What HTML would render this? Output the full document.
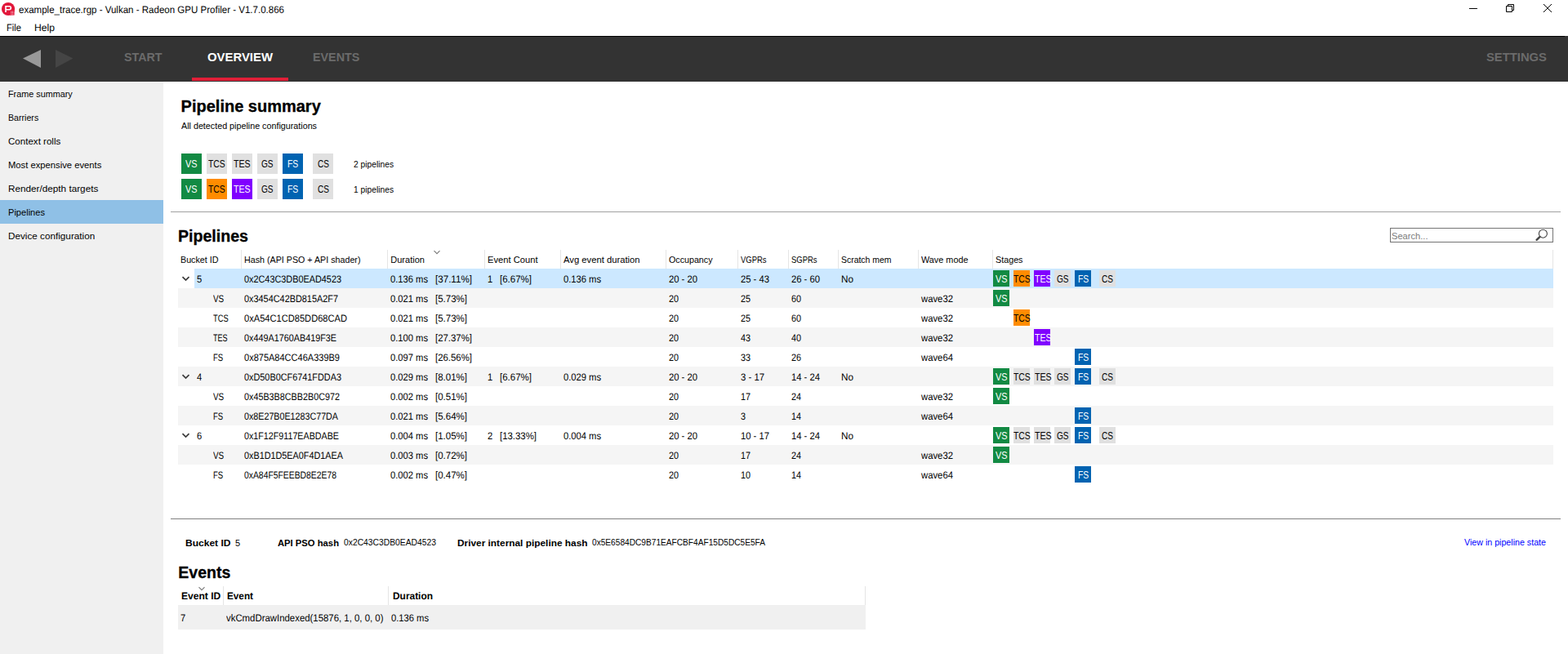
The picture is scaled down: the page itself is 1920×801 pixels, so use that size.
<!DOCTYPE html>
<html lang="en">
<head>
<meta charset="utf-8">
<title>example_trace.rgp - Vulkan - Radeon GPU Profiler - V1.7.0.866</title>
<style>
html,body{margin:0;padding:0;background:#fff;}
body{width:1920px;height:801px;position:relative;overflow:hidden;font-family:"Liberation Sans", sans-serif;}
#app div,#app span,#app svg{position:absolute;}
#app span{white-space:pre;line-height:1;transform-origin:0 0;}
.seg{font-size:12.3px;font-weight:400;text-rendering:geometricPrecision;}
.segb{font-size:12.3px;font-weight:700;text-rendering:geometricPrecision;}
.side{font-size:11px;font-weight:400;}
.tah{font-size:11px;font-weight:400;}
.tahb{font-size:11px;font-weight:700;}
.tab{font-size:14px;font-weight:700;}
.h1{font-size:20px;font-weight:700;}
.h2{font-size:19.5px;font-weight:700;}
.box{font-size:13px;font-weight:400;}

.h1,.h2{-webkit-text-stroke:0.3px #000;}
.bx{width:25px;height:25px;}
.bs{width:20px;height:20px;}

</style>
</head>
<body>
<div id="app">
<header class="titlebar">
<svg style="left:0;top:0" width="22" height="22" viewBox="0 0 22 22"><circle cx="10.05" cy="11" r="8.1" fill="#e2173a"/><path d="M7 14.9V7.8H11.4a1.95 1.95 0 0 1 0 3.9H7" fill="none" stroke="#fff" stroke-width="1.6"/><rect x="12.2" y="13" width="5.4" height="5.6" fill="#e2173a"/><path d="M13.2 14.2h3.4M13.2 15.7h3.4M13.2 17.2h3.4" stroke="#f7b3bf" stroke-width="0.9" stroke-dasharray="1.3 0.5"/></svg>
<svg style="left:1790px;top:0" width="130" height="22" viewBox="0 0 130 22"><path d="M9 10.5h10" stroke="#000" stroke-width="1" fill="none"/><path d="M54.5 7.5h7v7h-7z M56.5 7.5v-2h7v7h-2" stroke="#000" stroke-width="1" fill="none"/><path d="M100 5l10 10 M110 5l-10 10" stroke="#000" stroke-width="1" fill="none"/></svg>
<span class="seg" style="left:23px;top:6px;transform:scaleX(0.9372);">example_trace.rgp - Vulkan - Radeon GPU Profiler - V1.7.0.866</span>
<span class="seg" style="left:8px;top:28px;transform:scaleX(0.9078);">File</span>
<span class="seg" style="left:42px;top:28px;transform:scaleX(0.9883);">Help</span>
</header>
<nav class="toolbar">
<div style="left:0px;top:44px;width:1920px;height:56px;background:#333333;"></div>
<div style="left:0px;top:44px;width:1916px;height:1px;background:#000;"></div>
<svg style="left:0;top:45px" width="120" height="54" viewBox="0 45 120 54"><path d="M28 71.6L50 61V83z" fill="#999"/><path d="M68 61L89.5 71.6L68 83z" fill="#454545"/></svg>
<div style="left:235px;top:95px;width:118px;height:4px;background:#e01e37;"></div>
<span class="tab" style="left:152px;top:63px;color:#6b6b6b;transform:scaleX(1.0192);">START</span>
<span class="tab" style="left:254px;top:63px;color:#fff;transform:scaleX(1.0638);">OVERVIEW</span>
<span class="tab" style="left:383px;top:63px;color:#6b6b6b;transform:scaleX(1.0229);">EVENTS</span>
<span class="tab" style="left:1820px;top:63px;color:#6b6b6b;transform:scaleX(1.0569);">SETTINGS</span>
</nav>
<aside class="sidebar">
<div style="left:0px;top:100px;width:200px;height:701px;background:#f0f0f0;"></div>
<div style="left:0px;top:245px;width:200px;height:29px;background:#8fc0e6;"></div>
<span class="side" style="left:10.4px;top:110px;transform:scaleX(0.983);">Frame summary</span>
<span class="side" style="left:10.4px;top:139px;transform:scaleX(0.9658);">Barriers</span>
<span class="side" style="left:10.4px;top:168px;transform:scaleX(1.0517);">Context rolls</span>
<span class="side" style="left:10.4px;top:197px;transform:scaleX(1.0215);">Most expensive events</span>
<span class="side" style="left:10.4px;top:226px;transform:scaleX(1.0672);">Render/depth targets</span>
<span class="side" style="left:10.4px;top:255px;transform:scaleX(1.0081);">Pipelines</span>
<span class="side" style="left:10.4px;top:284px;transform:scaleX(1.0655);">Device configuration</span>
</aside>
<main>
<section class="summary">
<div class="bx" style="left:222px;top:188px;background:#128a43"></div>
<div class="bx" style="left:253px;top:188px;background:#e0e0e0"></div>
<div class="bx" style="left:284px;top:188px;background:#e0e0e0"></div>
<div class="bx" style="left:315px;top:188px;background:#e0e0e0"></div>
<div class="bx" style="left:346px;top:188px;background:#0063b1"></div>
<div class="bx" style="left:383px;top:188px;background:#e0e0e0"></div>
<div class="bx" style="left:222px;top:219px;background:#128a43"></div>
<div class="bx" style="left:253px;top:219px;background:#ff8c00"></div>
<div class="bx" style="left:284px;top:219px;background:#8000ff"></div>
<div class="bx" style="left:315px;top:219px;background:#e0e0e0"></div>
<div class="bx" style="left:346px;top:219px;background:#0063b1"></div>
<div class="bx" style="left:383px;top:219px;background:#e0e0e0"></div>
<div style="left:209px;top:259px;width:1702px;height:1px;background:#a0a0a0;"></div>
<span class="h1" style="left:221.6px;top:120px;">Pipeline summary</span>
<span class="tah" style="left:222px;top:149px;transform:scaleX(0.9764);">All detected pipeline configurations</span>
<span class="tah" style="left:433px;top:196px;transform:scaleX(0.9317);">2 pipelines</span>
<span class="tah" style="left:433px;top:227px;transform:scaleX(0.9317);">1 pipelines</span>
<span class="box" style="left:227.25px;top:194px;color:#fff;transform:scaleX(0.836);">VS</span>
<span class="box" style="left:255.1px;top:194px;transform:scaleX(0.8);">TCS</span>
<span class="box" style="left:286.2px;top:194px;transform:scaleX(0.8143);">TES</span>
<span class="box" style="left:320.2px;top:194px;transform:scaleX(0.7767);">GS</span>
<span class="box" style="left:351.85px;top:194px;color:#fff;transform:scaleX(0.8);">FS</span>
<span class="box" style="left:388.5px;top:194px;transform:scaleX(0.7751);">CS</span>
<span class="box" style="left:227.25px;top:225px;color:#fff;transform:scaleX(0.836);">VS</span>
<span class="box" style="left:255.1px;top:225px;transform:scaleX(0.8);">TCS</span>
<span class="box" style="left:286.2px;top:225px;color:#fff;transform:scaleX(0.8143);">TES</span>
<span class="box" style="left:320.2px;top:225px;transform:scaleX(0.7767);">GS</span>
<span class="box" style="left:351.85px;top:225px;color:#fff;transform:scaleX(0.8);">FS</span>
<span class="box" style="left:388.5px;top:225px;transform:scaleX(0.7751);">CS</span>
</section>
<section class="pipelines">
<div style="left:1702px;top:279px;width:198px;height:16px;border:1px solid #747474;background:#fff"></div>
<svg style="left:1876px;top:279px" width="24" height="18" viewBox="0 0 24 18"><circle cx="13.4" cy="7.2" r="5" fill="none" stroke="#444" stroke-width="1.1"/><path d="M9.4 11.2L5.6 14.8" stroke="#444" stroke-width="2.4" stroke-linecap="round"/></svg>
<div style="left:295px;top:306px;width:1px;height:23px;background:#e5e5e5;"></div>
<div style="left:474px;top:306px;width:1px;height:23px;background:#e5e5e5;"></div>
<div style="left:593px;top:306px;width:1px;height:23px;background:#e5e5e5;"></div>
<div style="left:686px;top:306px;width:1px;height:23px;background:#e5e5e5;"></div>
<div style="left:815px;top:306px;width:1px;height:23px;background:#e5e5e5;"></div>
<div style="left:903px;top:306px;width:1px;height:23px;background:#e5e5e5;"></div>
<div style="left:965px;top:306px;width:1px;height:23px;background:#e5e5e5;"></div>
<div style="left:1026px;top:306px;width:1px;height:23px;background:#e5e5e5;"></div>
<div style="left:1124px;top:306px;width:1px;height:23px;background:#e5e5e5;"></div>
<div style="left:1215px;top:306px;width:1px;height:23px;background:#e5e5e5;"></div>
<div style="left:1901px;top:306px;width:1px;height:23px;background:#e5e5e5;"></div>
<svg style="left:531px;top:306px" width="8" height="6" viewBox="0 0 8 6"><path d="M0.5 1.2L4 4.7L7.5 1.2" fill="none" stroke="#7a7a7a" stroke-width="1.1"/></svg>
<div style="left:238px;top:329px;width:1664px;height:24px;background:#cce8ff;"></div>
<svg style="left:222px;top:337px" width="11" height="9" viewBox="0 0 11 9"><path d="M1.5 2.1L5.5 6.1L9.5 2.1" fill="none" stroke="#3c3c3c" stroke-width="1.7"/></svg>
<div class="bs" style="left:1216px;top:331px;background:#128a43"></div>
<div class="bs" style="left:1241px;top:331px;background:#ff8c00"></div>
<div class="bs" style="left:1266px;top:331px;background:#8000ff"></div>
<div class="bs" style="left:1291px;top:331px;background:#e0e0e0"></div>
<div class="bs" style="left:1316px;top:331px;background:#0063b1"></div>
<div class="bs" style="left:1346px;top:331px;background:#e0e0e0"></div>
<div style="left:218px;top:353px;width:1684px;height:24px;background:#f5f5f5;"></div>
<div class="bs" style="left:1216px;top:355px;background:#128a43"></div>
<div class="bs" style="left:1241px;top:379px;background:#ff8c00"></div>
<div style="left:218px;top:401px;width:1684px;height:24px;background:#f5f5f5;"></div>
<div class="bs" style="left:1266px;top:403px;background:#8000ff"></div>
<div class="bs" style="left:1316px;top:427px;background:#0063b1"></div>
<div style="left:218px;top:449px;width:1684px;height:24px;background:#f5f5f5;"></div>
<svg style="left:222px;top:457px" width="11" height="9" viewBox="0 0 11 9"><path d="M1.5 2.1L5.5 6.1L9.5 2.1" fill="none" stroke="#3c3c3c" stroke-width="1.7"/></svg>
<div class="bs" style="left:1216px;top:451px;background:#128a43"></div>
<div class="bs" style="left:1241px;top:451px;background:#e0e0e0"></div>
<div class="bs" style="left:1266px;top:451px;background:#e0e0e0"></div>
<div class="bs" style="left:1291px;top:451px;background:#e0e0e0"></div>
<div class="bs" style="left:1316px;top:451px;background:#0063b1"></div>
<div class="bs" style="left:1346px;top:451px;background:#e0e0e0"></div>
<div class="bs" style="left:1216px;top:475px;background:#128a43"></div>
<div style="left:218px;top:497px;width:1684px;height:24px;background:#f5f5f5;"></div>
<div class="bs" style="left:1316px;top:499px;background:#0063b1"></div>
<svg style="left:222px;top:529px" width="11" height="9" viewBox="0 0 11 9"><path d="M1.5 2.1L5.5 6.1L9.5 2.1" fill="none" stroke="#3c3c3c" stroke-width="1.7"/></svg>
<div class="bs" style="left:1216px;top:523px;background:#128a43"></div>
<div class="bs" style="left:1241px;top:523px;background:#e0e0e0"></div>
<div class="bs" style="left:1266px;top:523px;background:#e0e0e0"></div>
<div class="bs" style="left:1291px;top:523px;background:#e0e0e0"></div>
<div class="bs" style="left:1316px;top:523px;background:#0063b1"></div>
<div class="bs" style="left:1346px;top:523px;background:#e0e0e0"></div>
<div style="left:218px;top:545px;width:1684px;height:24px;background:#f5f5f5;"></div>
<div class="bs" style="left:1216px;top:547px;background:#128a43"></div>
<div class="bs" style="left:1316px;top:571px;background:#0063b1"></div>
<span class="h2" style="left:218.4px;top:280px;transform:scaleX(1.0044);">Pipelines</span>
<span class="tah" style="left:1704.4px;top:284px;color:#7c7c7c;transform:scaleX(1.0106);">Search...</span>
<span class="tah" style="left:221.3px;top:313px;transform:scaleX(0.9751);">Bucket ID</span>
<span class="tah" style="left:299.3px;top:313px;transform:scaleX(0.9731);">Hash (API PSO + API shader)</span>
<span class="tah" style="left:478.3px;top:313px;">Duration</span>
<span class="tah" style="left:597.3px;top:313px;transform:scaleX(1.0157);">Event Count</span>
<span class="tah" style="left:690.3px;top:313px;transform:scaleX(1.0215);">Avg event duration</span>
<span class="tah" style="left:819.3px;top:313px;transform:scaleX(0.9722);">Occupancy</span>
<span class="tah" style="left:907.3px;top:313px;transform:scaleX(0.8586);">VGPRs</span>
<span class="tah" style="left:969.3px;top:313px;transform:scaleX(0.8586);">SGPRs</span>
<span class="tah" style="left:1030.3px;top:313px;transform:scaleX(0.9491);">Scratch mem</span>
<span class="tah" style="left:1128.3px;top:313px;transform:scaleX(0.9863);">Wave mode</span>
<span class="tah" style="left:1219.3px;top:313px;transform:scaleX(0.9781);">Stages</span>
<span class="seg" style="left:241.2px;top:336px;transform:scaleX(0.9059);">5</span>
<span class="seg" style="left:299px;top:336px;transform:scaleX(0.8836);">0x2C43C3DB0EAD4523</span>
<span class="seg" style="left:478px;top:336px;transform:scaleX(0.9092);">0.136 ms</span>
<span class="seg" style="left:533px;top:336px;transform:scaleX(0.9446);">[37.11%]</span>
<span class="seg" style="left:597px;top:336px;transform:scaleX(0.9059);">1</span>
<span class="seg" style="left:612px;top:336px;transform:scaleX(0.9352);">[6.67%]</span>
<span class="seg" style="left:690px;top:336px;transform:scaleX(0.9092);">0.136 ms</span>
<span class="seg" style="left:819px;top:336px;transform:scaleX(0.9139);">20 - 20</span>
<span class="seg" style="left:907px;top:336px;transform:scaleX(0.9139);">25 - 43</span>
<span class="seg" style="left:969px;top:336px;transform:scaleX(0.9139);">26 - 60</span>
<span class="seg" style="left:1030px;top:336px;transform:scaleX(0.9533);">No</span>
<span class="seg" style="left:261px;top:360px;transform:scaleX(0.8046);">VS</span>
<span class="seg" style="left:299px;top:360px;transform:scaleX(0.8853);">0x3454C42BD815A2F7</span>
<span class="seg" style="left:478px;top:360px;transform:scaleX(0.9092);">0.021 ms</span>
<span class="seg" style="left:533px;top:360px;transform:scaleX(0.9352);">[5.73%]</span>
<span class="seg" style="left:819px;top:360px;transform:scaleX(0.8767);">20</span>
<span class="seg" style="left:907px;top:360px;transform:scaleX(0.8767);">25</span>
<span class="seg" style="left:969px;top:360px;transform:scaleX(0.8767);">60</span>
<span class="seg" style="left:1128px;top:360px;transform:scaleX(0.92);">wave32</span>
<span class="seg" style="left:261px;top:384px;transform:scaleX(0.7558);">TCS</span>
<span class="seg" style="left:299px;top:384px;transform:scaleX(0.9036);">0xA54C1CD85DD68CAD</span>
<span class="seg" style="left:478px;top:384px;transform:scaleX(0.9092);">0.021 ms</span>
<span class="seg" style="left:533px;top:384px;transform:scaleX(0.9352);">[5.73%]</span>
<span class="seg" style="left:819px;top:384px;transform:scaleX(0.8767);">20</span>
<span class="seg" style="left:907px;top:384px;transform:scaleX(0.8767);">25</span>
<span class="seg" style="left:969px;top:384px;transform:scaleX(0.8767);">60</span>
<span class="seg" style="left:1128px;top:384px;transform:scaleX(0.92);">wave32</span>
<span class="seg" style="left:261px;top:408px;transform:scaleX(0.7357);">TES</span>
<span class="seg" style="left:299px;top:408px;transform:scaleX(0.8791);">0x449A1760AB419F3E</span>
<span class="seg" style="left:478px;top:408px;transform:scaleX(0.9092);">0.100 ms</span>
<span class="seg" style="left:533px;top:408px;transform:scaleX(0.9269);">[27.37%]</span>
<span class="seg" style="left:819px;top:408px;transform:scaleX(0.8767);">20</span>
<span class="seg" style="left:907px;top:408px;transform:scaleX(0.8767);">43</span>
<span class="seg" style="left:969px;top:408px;transform:scaleX(0.8767);">40</span>
<span class="seg" style="left:1128px;top:408px;transform:scaleX(0.92);">wave32</span>
<span class="seg" style="left:261px;top:432px;transform:scaleX(0.7761);">FS</span>
<span class="seg" style="left:299px;top:432px;transform:scaleX(0.8959);">0x875A84CC46A339B9</span>
<span class="seg" style="left:478px;top:432px;transform:scaleX(0.9092);">0.097 ms</span>
<span class="seg" style="left:533px;top:432px;transform:scaleX(0.9269);">[26.56%]</span>
<span class="seg" style="left:819px;top:432px;transform:scaleX(0.8767);">20</span>
<span class="seg" style="left:907px;top:432px;transform:scaleX(0.8767);">33</span>
<span class="seg" style="left:969px;top:432px;transform:scaleX(0.8767);">26</span>
<span class="seg" style="left:1128px;top:432px;transform:scaleX(0.92);">wave64</span>
<span class="seg" style="left:241.2px;top:456px;transform:scaleX(0.9059);">4</span>
<span class="seg" style="left:299px;top:456px;transform:scaleX(0.8837);">0xD50B0CF6741FDDA3</span>
<span class="seg" style="left:478px;top:456px;transform:scaleX(0.9092);">0.029 ms</span>
<span class="seg" style="left:533px;top:456px;transform:scaleX(0.9352);">[8.01%]</span>
<span class="seg" style="left:597px;top:456px;transform:scaleX(0.9059);">1</span>
<span class="seg" style="left:612px;top:456px;transform:scaleX(0.9352);">[6.67%]</span>
<span class="seg" style="left:690px;top:456px;transform:scaleX(0.9092);">0.029 ms</span>
<span class="seg" style="left:819px;top:456px;transform:scaleX(0.9139);">20 - 20</span>
<span class="seg" style="left:907px;top:456px;transform:scaleX(0.922);">3 - 17</span>
<span class="seg" style="left:969px;top:456px;transform:scaleX(0.9139);">14 - 24</span>
<span class="seg" style="left:1030px;top:456px;transform:scaleX(0.9533);">No</span>
<span class="seg" style="left:261px;top:480px;transform:scaleX(0.8046);">VS</span>
<span class="seg" style="left:299px;top:480px;transform:scaleX(0.8776);">0x45B3B8CBB2B0C972</span>
<span class="seg" style="left:478px;top:480px;transform:scaleX(0.9092);">0.002 ms</span>
<span class="seg" style="left:533px;top:480px;transform:scaleX(0.9352);">[0.51%]</span>
<span class="seg" style="left:819px;top:480px;transform:scaleX(0.8767);">20</span>
<span class="seg" style="left:907px;top:480px;transform:scaleX(0.8767);">17</span>
<span class="seg" style="left:969px;top:480px;transform:scaleX(0.8767);">24</span>
<span class="seg" style="left:1128px;top:480px;transform:scaleX(0.92);">wave32</span>
<span class="seg" style="left:261px;top:504px;transform:scaleX(0.7761);">FS</span>
<span class="seg" style="left:299px;top:504px;transform:scaleX(0.8715);">0x8E27B0E1283C77DA</span>
<span class="seg" style="left:478px;top:504px;transform:scaleX(0.9092);">0.021 ms</span>
<span class="seg" style="left:533px;top:504px;transform:scaleX(0.9352);">[5.64%]</span>
<span class="seg" style="left:819px;top:504px;transform:scaleX(0.8767);">20</span>
<span class="seg" style="left:907px;top:504px;transform:scaleX(0.8767);">3</span>
<span class="seg" style="left:969px;top:504px;transform:scaleX(0.8767);">14</span>
<span class="seg" style="left:1128px;top:504px;transform:scaleX(0.92);">wave64</span>
<span class="seg" style="left:241.2px;top:528px;transform:scaleX(0.9059);">6</span>
<span class="seg" style="left:299px;top:528px;transform:scaleX(0.8718);">0x1F12F9117EABDABE</span>
<span class="seg" style="left:478px;top:528px;transform:scaleX(0.9092);">0.004 ms</span>
<span class="seg" style="left:533px;top:528px;transform:scaleX(0.9352);">[1.05%]</span>
<span class="seg" style="left:597px;top:528px;transform:scaleX(0.9059);">2</span>
<span class="seg" style="left:612px;top:528px;transform:scaleX(0.9269);">[13.33%]</span>
<span class="seg" style="left:690px;top:528px;transform:scaleX(0.9092);">0.004 ms</span>
<span class="seg" style="left:819px;top:528px;transform:scaleX(0.9139);">20 - 20</span>
<span class="seg" style="left:907px;top:528px;transform:scaleX(0.9139);">10 - 17</span>
<span class="seg" style="left:969px;top:528px;transform:scaleX(0.9139);">14 - 24</span>
<span class="seg" style="left:1030px;top:528px;transform:scaleX(0.9533);">No</span>
<span class="seg" style="left:261px;top:552px;transform:scaleX(0.8046);">VS</span>
<span class="seg" style="left:299px;top:552px;transform:scaleX(0.8807);">0xB1D1D5EA0F4D1AEA</span>
<span class="seg" style="left:478px;top:552px;transform:scaleX(0.9092);">0.003 ms</span>
<span class="seg" style="left:533px;top:552px;transform:scaleX(0.9352);">[0.72%]</span>
<span class="seg" style="left:819px;top:552px;transform:scaleX(0.8767);">20</span>
<span class="seg" style="left:907px;top:552px;transform:scaleX(0.8767);">17</span>
<span class="seg" style="left:969px;top:552px;transform:scaleX(0.8767);">24</span>
<span class="seg" style="left:1128px;top:552px;transform:scaleX(0.92);">wave32</span>
<span class="seg" style="left:261px;top:576px;transform:scaleX(0.7761);">FS</span>
<span class="seg" style="left:299px;top:576px;transform:scaleX(0.8434);">0xA84F5FEEBD8E2E78</span>
<span class="seg" style="left:478px;top:576px;transform:scaleX(0.9092);">0.002 ms</span>
<span class="seg" style="left:533px;top:576px;transform:scaleX(0.9352);">[0.47%]</span>
<span class="seg" style="left:819px;top:576px;transform:scaleX(0.8767);">20</span>
<span class="seg" style="left:907px;top:576px;transform:scaleX(0.8767);">10</span>
<span class="seg" style="left:969px;top:576px;transform:scaleX(0.8767);">14</span>
<span class="seg" style="left:1128px;top:576px;transform:scaleX(0.92);">wave64</span>
<span class="box" style="left:1218.9px;top:335px;color:#fff;transform:scaleX(0.836);">VS</span>
<span class="box" style="left:1241.4px;top:335px;transform:scaleX(0.8);">TCS</span>
<span class="box" style="left:1266.6px;top:335px;color:#fff;transform:scaleX(0.8143);">TES</span>
<span class="box" style="left:1293.8px;top:335px;transform:scaleX(0.7767);">GS</span>
<span class="box" style="left:1320px;top:335px;color:#fff;transform:scaleX(0.8);">FS</span>
<span class="box" style="left:1348.8px;top:335px;transform:scaleX(0.7751);">CS</span>
<span class="box" style="left:1218.9px;top:359px;color:#fff;transform:scaleX(0.836);">VS</span>
<span class="box" style="left:1241.4px;top:383px;transform:scaleX(0.8);">TCS</span>
<span class="box" style="left:1266.6px;top:407px;color:#fff;transform:scaleX(0.8143);">TES</span>
<span class="box" style="left:1320px;top:431px;color:#fff;transform:scaleX(0.8);">FS</span>
<span class="box" style="left:1218.9px;top:455px;color:#fff;transform:scaleX(0.836);">VS</span>
<span class="box" style="left:1241.4px;top:455px;transform:scaleX(0.8);">TCS</span>
<span class="box" style="left:1266.6px;top:455px;transform:scaleX(0.8143);">TES</span>
<span class="box" style="left:1293.8px;top:455px;transform:scaleX(0.7767);">GS</span>
<span class="box" style="left:1320px;top:455px;color:#fff;transform:scaleX(0.8);">FS</span>
<span class="box" style="left:1348.8px;top:455px;transform:scaleX(0.7751);">CS</span>
<span class="box" style="left:1218.9px;top:479px;color:#fff;transform:scaleX(0.836);">VS</span>
<span class="box" style="left:1320px;top:503px;color:#fff;transform:scaleX(0.8);">FS</span>
<span class="box" style="left:1218.9px;top:527px;color:#fff;transform:scaleX(0.836);">VS</span>
<span class="box" style="left:1241.4px;top:527px;transform:scaleX(0.8);">TCS</span>
<span class="box" style="left:1266.6px;top:527px;transform:scaleX(0.8143);">TES</span>
<span class="box" style="left:1293.8px;top:527px;transform:scaleX(0.7767);">GS</span>
<span class="box" style="left:1320px;top:527px;color:#fff;transform:scaleX(0.8);">FS</span>
<span class="box" style="left:1348.8px;top:527px;transform:scaleX(0.7751);">CS</span>
<span class="box" style="left:1218.9px;top:551px;color:#fff;transform:scaleX(0.836);">VS</span>
<span class="box" style="left:1320px;top:575px;color:#fff;transform:scaleX(0.8);">FS</span>
</section>
<section class="details">
<div style="left:209px;top:635px;width:1702px;height:1px;background:#808080;"></div>
<span class="tahb" style="left:227px;top:660px;transform:scaleX(1.0936);">Bucket ID</span>
<span class="tah" style="left:288px;top:660px;">5</span>
<span class="tahb" style="left:340px;top:660px;transform:scaleX(1.0224);">API PSO hash</span>
<span class="tah" style="left:421px;top:659px;transform:scaleX(0.938);">0x2C43C3DB0EAD4523</span>
<span class="tahb" style="left:560px;top:660px;transform:scaleX(1.0782);">Driver internal pipeline hash</span>
<span class="tah" style="left:725px;top:659px;transform:scaleX(0.9221);">0x5E6584DC9B71EAFCBF4AF15D5DC5E5FA</span>
<span class="tah" style="left:1792.8px;top:659px;color:#0000ff;transform:scaleX(0.9694);">View in pipeline state</span>
</section>
<section class="events">
<div style="left:273px;top:718px;width:1px;height:23px;background:#e5e5e5;"></div>
<div style="left:475px;top:718px;width:1px;height:23px;background:#e5e5e5;"></div>
<div style="left:1059px;top:718px;width:1px;height:23px;background:#e5e5e5;"></div>
<svg style="left:243px;top:718px" width="8" height="6" viewBox="0 0 8 6"><path d="M0.5 1.2L4 4.7L7.5 1.2" fill="none" stroke="#7a7a7a" stroke-width="1.1"/></svg>
<div style="left:218px;top:741px;width:842px;height:30px;background:#f0f0f0;"></div>
<span class="h2" style="left:218.3px;top:692px;">Events</span>
<span class="segb" style="left:222.2px;top:724px;transform:scaleX(0.9816);">Event ID</span>
<span class="segb" style="left:278.3px;top:724px;transform:scaleX(0.9552);">Event</span>
<span class="segb" style="left:480.5px;top:724px;transform:scaleX(0.9691);">Duration</span>
<span class="seg" style="left:221.2px;top:751px;transform:scaleX(0.9059);">7</span>
<span class="seg" style="left:277px;top:751px;transform:scaleX(0.9264);">vkCmdDrawIndexed(15876, 1, 0, 0, 0)</span>
<span class="seg" style="left:479px;top:751px;transform:scaleX(0.9092);">0.136 ms</span>
</section>
</main>
</div>
</body>
</html>
